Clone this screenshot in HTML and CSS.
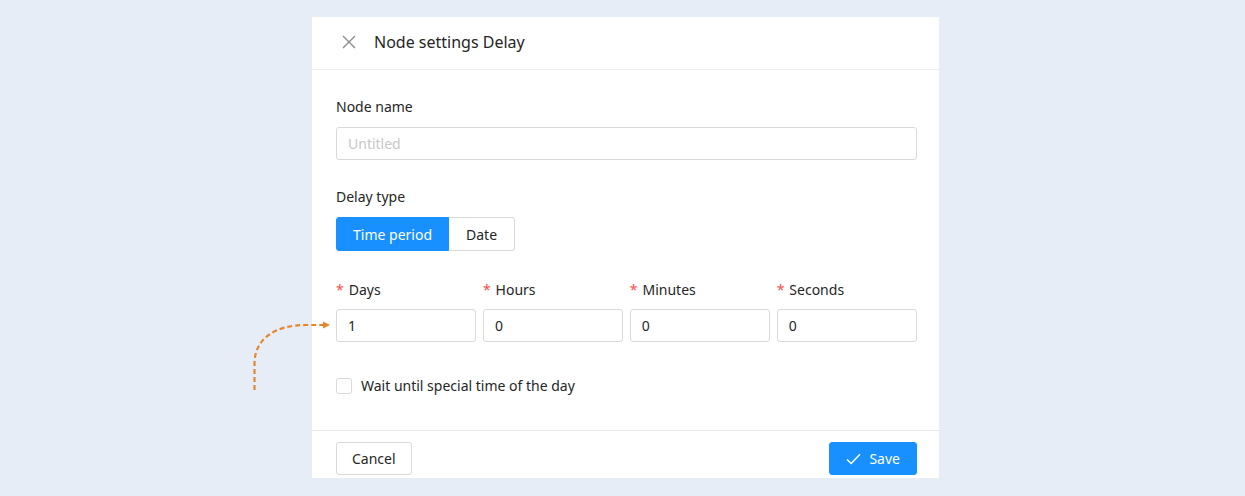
FILE: index.html
```html
<!DOCTYPE html>
<html lang="en">
<head>
<meta charset="utf-8">
<title>Node settings Delay</title>
<link rel="stylesheet" href="styles.css">
</head>
<body>
<svg class="flow-arrow" width="92" height="80" viewBox="0 0 92 80" aria-hidden="true">
  <path d="M14.5 74 L14.5 48 C14.5 22 36 9 66 9 L84 9" fill="none" stroke="#e8852b" stroke-width="2.2" stroke-dasharray="5 3"/>
  <path d="M83 5.5 L90 9 L83 12.5 Z" fill="#e8852b"/>
</svg>
<div class="drawer">
  <header class="drawer-head">
    <svg class="close-icon" width="14" height="14" viewBox="0 0 14 14" aria-hidden="true">
      <path d="M1 1 L13 13 M13 1 L1 13" stroke="#8c8c8c" stroke-width="1.4" fill="none"/>
    </svg>
    <span class="drawer-title">Node settings Delay</span>
  </header>
  <div class="drawer-body">
    <div class="field">
      <label class="field-label">Node name</label>
      <div class="input placeholder">Untitled</div>
    </div>
    <div class="field">
      <label class="field-label">Delay type</label>
      <div class="segmented">
        <span class="seg seg-active">Time period</span>
        <span class="seg">Date</span>
      </div>
    </div>
    <div class="period-grid">
      <div class="cell">
        <label class="field-label"><span class="req">*</span>Days</label>
        <div class="input">1</div>
      </div>
      <div class="cell">
        <label class="field-label"><span class="req">*</span>Hours</label>
        <div class="input">0</div>
      </div>
      <div class="cell">
        <label class="field-label"><span class="req">*</span>Minutes</label>
        <div class="input">0</div>
      </div>
      <div class="cell">
        <label class="field-label"><span class="req">*</span>Seconds</label>
        <div class="input">0</div>
      </div>
    </div>
    <label class="check-row">
      <span class="checkbox"></span>
      <span>Wait until special time of the day</span>
    </label>
  </div>
  <footer class="drawer-foot">
    <button class="btn">Cancel</button>
    <button class="btn btn-primary">
      <svg width="15" height="12" viewBox="0 0 15 12" aria-hidden="true">
        <path d="M1 6.5 L5.2 10.5 L14 1.2" stroke="#fff" stroke-width="1.5" fill="none"/>
      </svg>
      Save
    </button>
  </footer>
</div>
</body>
</html>
```

FILE: styles.css
```css
* { box-sizing: border-box; }

html, body {
  margin: 0;
  height: 100%;
}

body {
  background: #e6edf6;
  font-family: "Noto Sans", "Open Sans", sans-serif;
  font-size: 14px;
  color: #262626;
  position: relative;
  padding: 17px 0 0 312px;
}

.flow-arrow {
  position: absolute;
  left: 240px;
  top: 316px;
}

.drawer {
  width: 627px;
  height: 461px;
  background: #fff;
  display: flex;
  flex-direction: column;
}

.drawer-head {
  height: 53px;
  border-bottom: 1px solid #ececec;
  display: flex;
  align-items: center;
  padding: 0 0 3px 30px;
  gap: 18px;
}

.close-icon { display: block; }

.drawer-title {
  font-size: 16px;
  color: #262626;
}

.drawer-body {
  flex: 1;
  padding: 26px 22px 0 24px;
}

.field { margin-bottom: 26px; }

.field-label {
  display: block;
  line-height: 22px;
  margin-bottom: 9px;
  color: #262626;
}

.input {
  height: 33px;
  border: 1px solid #d9d9d9;
  border-radius: 3px;
  padding: 0 11px;
  display: flex;
  align-items: center;
  color: #262626;
}

.input.placeholder { color: #c8c8c8; }

.segmented {
  display: flex;
  width: max-content;
  height: 34px;
}

.seg {
  display: flex;
  align-items: center;
  padding: 0 16px;
  border: 1px solid #d9d9d9;
  color: #262626;
}

.seg-active {
  background: #1890ff;
  border-color: #1890ff;
  color: #fff;
  border-radius: 3px 0 0 3px;
}

.seg:last-child {
  border-left: none;
  padding: 0 17px;
  border-radius: 0 3px 3px 0;
}

.period-grid {
  display: grid;
  grid-template-columns: repeat(4, 1fr);
  column-gap: 6.5px;
  padding-top: 2px;
}

.period-grid .field-label { margin-bottom: 8px; }

.req {
  color: #ff4d4f;
  margin-right: 5px;
}

.check-row {
  display: flex;
  align-items: center;
  gap: 9px;
  margin-top: 34px;
}

.checkbox {
  width: 16px;
  height: 16px;
  border: 1px solid #d9d9d9;
  border-radius: 3px;
}

.drawer-foot {
  border-top: 1px solid #e8e8e8;
  height: 48px;
  display: flex;
  justify-content: space-between;
  align-items: flex-start;
  padding: 11px 22px 0 24px;
}

.btn {
  font: inherit;
  height: 33px;
  padding: 0 15px;
  border: 1px solid #d9d9d9;
  border-radius: 3px;
  background: #fff;
  color: #262626;
  display: flex;
  align-items: center;
  gap: 9px;
}

.btn-primary {
  background: #1890ff;
  border-color: #1890ff;
  color: #fff;
  padding: 0 16px 0 16px;
  gap: 8px;
}
```
